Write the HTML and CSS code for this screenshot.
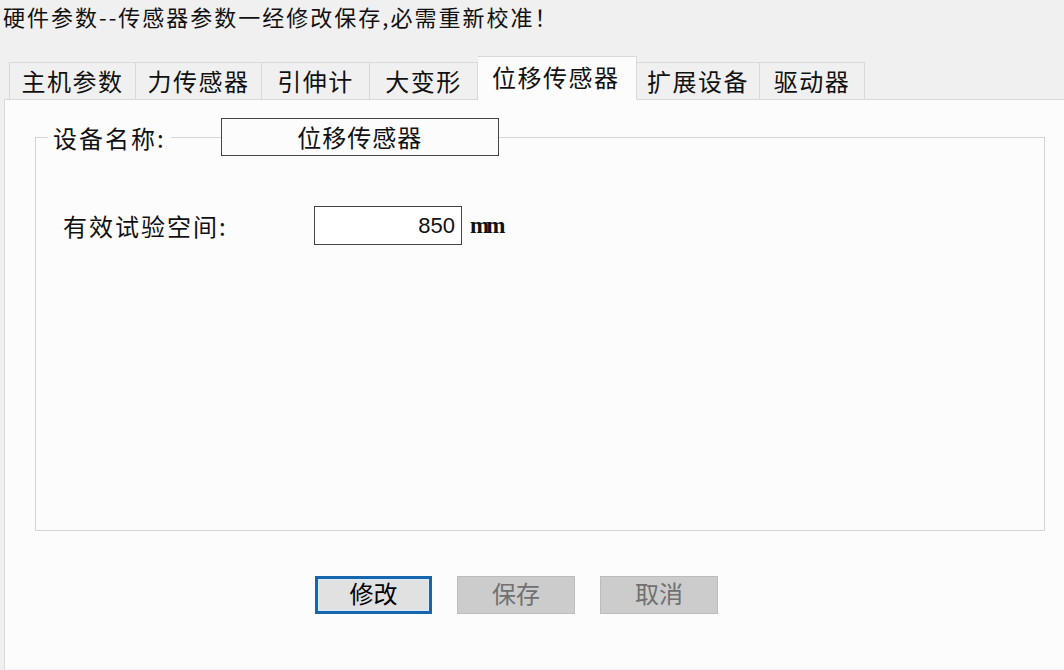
FILE: index.html
```html
<!DOCTYPE html>
<html lang="zh-CN">

<head>
  <meta charset="UTF-8">
  <title>硬件参数</title>
  <link rel="stylesheet" href="styles.css">
</head>

<body>

  <div class="title">硬件参数--传感器参数一经修改保存,必需重新校准！</div>

  <!-- 选项卡 -->
  <div class="tabs">
    <div class="tab">主机参数</div>
    <div class="tab">力传感器</div>
    <div class="tab">引伸计</div>
    <div class="tab">大变形</div>
    <div class="tab active">位移传感器</div>
    <div class="tab">扩展设备</div>
    <div class="tab">驱动器</div>
  </div>

  <div class="panel">
    <div class="group">
      <div class="group-head">
        <span class="group-label">设备名称:</span>
        <div class="name-box">位移传感器</div>
      </div>

      <div class="field-row">
        <label class="field-label">有效试验空间:</label>
        <div class="value-box">850</div>
        <span class="unit">mm</span>
      </div>
    </div>

    <div class="buttons">
      <button class="btn primary">修改</button>
      <button class="btn" disabled>保存</button>
      <button class="btn" disabled>取消</button>
    </div>
  </div>

</body>

</html>
```

FILE: styles.css
```css
* {
  margin: 0;
  padding: 0;
  box-sizing: border-box;
}

body {
  font-family: "Noto Sans CJK SC", "Noto Sans", sans-serif;
  background-color: #f0f0f0;
  color: #111;
  height: 670px;
  overflow: hidden;
}

.title {
  height: 32px;
  line-height: 32px;
  padding-left: 3px;
  font-size: 22px;
  letter-spacing: 2px;
  white-space: nowrap;
}

.tabs {
  display: flex;
  align-items: flex-end;
  height: 43px;
  margin-top: 25px;
  padding-left: 9px;
  position: relative;
  z-index: 1;
  margin-bottom: -1px;
}

.tab {
  height: 38px;
  line-height: 36px;
  font-size: 24px;
  text-align: center;
  letter-spacing: 1.5px;
  background-color: #f0f0f0;
  border: 1px solid #d9d9d9;
  border-left: none;
  white-space: nowrap;
}

/* 各选项卡宽度 */
.tab:nth-child(1) { width: 127px; border-left: 1px solid #d9d9d9; }
.tab:nth-child(2) { width: 126px; }
.tab:nth-child(3) { width: 108px; }
.tab:nth-child(4) { width: 108px; }
.tab:nth-child(5) { width: 159px; }
.tab:nth-child(6) { width: 123px; }
.tab:nth-child(7) { width: 105px; }

.tab.active {
  height: 44px;
  line-height: 40px;
  background-color: #fcfcfc;
  border-bottom-color: #fcfcfc;
  text-align: left;
  padding-left: 14px;
}

.panel {
  margin-left: 4px;
  height: 570px;
  background-color: #fcfcfc;
  border-top: 1px solid #d9d9d9;
  border-left: 1px solid #d9d9d9;
  padding-top: 37px;
}

.group {
  margin: 0 19px 0 30px;
  height: 394px;
  border: 1px solid #d4d4d4;
}

.group-head {
  display: flex;
  align-items: center;
  margin-top: -20px;
  padding-left: 12px;
}

.group-label {
  font-size: 24px;
  padding: 0 5px;
  background-color: #fcfcfc;
  letter-spacing: 2px;
}

.name-box {
  margin-left: 50px;
  width: 278px;
  height: 38px;
  line-height: 36px;
  border: 1px solid #444;
  background-color: #fcfcfc;
  text-align: center;
  font-size: 24px;
  letter-spacing: 1px;
}

.field-row {
  display: flex;
  align-items: center;
  margin-top: 50px;
  padding-left: 27px;
}

.field-label {
  width: 251px;
  font-size: 24px;
  letter-spacing: 2px;
}

.value-box {
  width: 148px;
  height: 39px;
  line-height: 37px;
  border: 1px solid #444;
  background-color: #fff;
  text-align: right;
  padding-right: 6px;
  font-family: "Liberation Sans", sans-serif;
  font-size: 22px;
}

.unit {
  margin-left: 8px;
  font-family: "Liberation Serif", serif;
  font-weight: bold;
  font-size: 23px;
  letter-spacing: -3px;
}

.buttons {
  display: flex;
  gap: 25px;
  margin-top: 45px;
  padding-left: 310px;
}

.btn {
  width: 118px;
  height: 38px;
  padding-bottom: 4px;
  font-family: "Noto Sans CJK SC", sans-serif;
  font-size: 24px;
  line-height: 1;
  background-color: #cccccc;
  border: 1px solid #bcbcbc;
  color: #707070;
}

.btn.primary {
  width: 117px;
  background-color: #e1e1e1;
  border: 3px solid #1566ad;
  box-shadow: inset 0 0 0 1px #d6ecfa;
  color: #000;
}
```
